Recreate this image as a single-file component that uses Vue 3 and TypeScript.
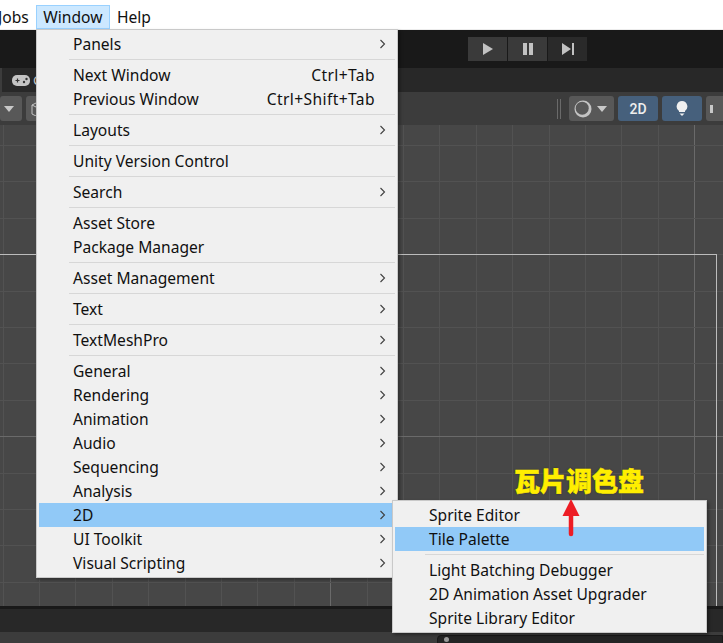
<script setup lang="ts">
import { computed } from 'vue';

type MenuEntry =
  | { sep: true }
  | { label: string; shortcut?: string; arrow?: boolean; active?: boolean };

const windowMenu: MenuEntry[] = [
  { label: 'Panels', arrow: true },
  { sep: true },
  { label: 'Next Window', shortcut: 'Ctrl+Tab' },
  { label: 'Previous Window', shortcut: 'Ctrl+Shift+Tab' },
  { sep: true },
  { label: 'Layouts', arrow: true },
  { sep: true },
  { label: 'Unity Version Control' },
  { sep: true },
  { label: 'Search', arrow: true },
  { sep: true },
  { label: 'Asset Store' },
  { label: 'Package Manager' },
  { sep: true },
  { label: 'Asset Management', arrow: true },
  { sep: true },
  { label: 'Text', arrow: true },
  { sep: true },
  { label: 'TextMeshPro', arrow: true },
  { sep: true },
  { label: 'General', arrow: true },
  { label: 'Rendering', arrow: true },
  { label: 'Animation', arrow: true },
  { label: 'Audio', arrow: true },
  { label: 'Sequencing', arrow: true },
  { label: 'Analysis', arrow: true },
  { label: '2D', arrow: true, active: true },
  { label: 'UI Toolkit', arrow: true },
  { label: 'Visual Scripting', arrow: true },
];

const subMenu: MenuEntry[] = [
  { label: 'Sprite Editor' },
  { label: 'Tile Palette', active: true },
  { sep: true },
  { label: 'Light Batching Debugger' },
  { label: '2D Animation Asset Upgrader' },
  { label: 'Sprite Library Editor' },
];

// Scene grid, cell is 36.4px, every tenth line is brighter
const gridX = computed(() => {
  const lines = [];
  for (let i = 0; i < 20; i++) {
    lines.push({ pos: Math.round(2.5 + 36.4 * i) + 0.5, major: i === 9 || i === 19 });
  }
  return lines;
});
const gridY = computed(() => {
  const lines = [];
  for (let i = 0; i < 14; i++) {
    lines.push({ pos: Math.round(20 + 36.4 * i) + 0.5, major: i === 8 });
  }
  return lines;
});
</script>

<template>
  <div class="editor">
    <div class="menubar">
      <span class="menubar-item first">Jobs</span>
      <span class="menubar-item open">Window</span>
      <span class="menubar-item">Help</span>
    </div>

    <div class="topbar">
      <div class="play-group">
        <button class="play-btn">
          <svg width="12" height="14" viewBox="0 0 12 14"><path d="M1 1l10 6-10 6z" fill="#c2c2c2" /></svg>
        </button>
        <button class="play-btn">
          <svg width="12" height="14" viewBox="0 0 12 14"><path d="M1 1h4v12H1zM7 1h4v12H7z" fill="#c2c2c2" /></svg>
        </button>
        <button class="play-btn dim">
          <svg width="14" height="14" viewBox="0 0 14 14"><path d="M1 1l9 6-9 6zM11 1h2v12h-2z" fill="#c2c2c2" /></svg>
        </button>
      </div>
    </div>

    <div class="tabbar">
      <div class="tab-edge"></div>
      <svg class="pad-icon" width="18" height="11" viewBox="0 0 18 11">
        <rect x="0" y="0" width="18" height="11" rx="5" fill="#c4c4c4" />
        <path d="M3.500 5.500h4M5.500 3.500v4" stroke="#333" stroke-width="1.200" />
        <circle cx="12" cy="7" r="1.200" fill="#333" />
        <circle cx="14.500" cy="4" r="1.200" fill="#333" />
      </svg>
      <span class="tab-label">Game</span>
    </div>

    <div class="toolbar">
      <div class="tool-btn caret-btn"><span class="caret"></span></div>
      <div class="tool-btn cube-btn">
        <svg width="10" height="14" viewBox="0 0 10 14" fill="none" stroke="#c4c4c4">
          <path d="M1 3l4-2 5 2v9l-5 2-4-2zM1 3l4 2 5-2" />
        </svg>
      </div>
      <div class="spacer"></div>
      <div class="handle"></div>
      <div class="tool-btn shade-btn">
        <svg width="18" height="18" viewBox="0 0 18 18">
          <circle cx="9" cy="9" r="8.500" fill="#c4c4c4" />
          <circle cx="8.200" cy="8.200" r="6.500" fill="#585858" />
        </svg>
        <span class="caret"></span>
      </div>
      <div class="tool-btn mode-btn">2D</div>
      <div class="tool-btn mode-btn">
        <svg width="12" height="16" viewBox="0 0 12 16">
          <path d="M6 0a5.500 5.500 0 0 1 3 10v1H3v-1A5.500 5.500 0 0 1 6 0z" fill="#f0f0f0" />
          <path d="M3.500 12.500h5L6 15z" fill="#f0f0f0" />
        </svg>
      </div>
      <div class="tool-btn last-btn"><span class="mark"></span></div>
    </div>

    <div class="scene">
      <svg class="grid" width="723" height="481" shape-rendering="crispEdges">
        <line
          v-for="l in gridX"
          :key="'x' + l.pos"
          :x1="l.pos"
          :x2="l.pos"
          y1="0"
          y2="481"
          :stroke="l.major ? '#6a6a6a' : '#525252'"
        />
        <line
          v-for="l in gridY"
          :key="'y' + l.pos"
          x1="0"
          x2="723"
          :y1="l.pos"
          :y2="l.pos"
          :stroke="l.major ? '#6a6a6a' : '#525252'"
        />
      </svg>
      <div class="frame"></div>
    </div>

    <div class="bottom-rule"></div>
    <div class="bottom-bar"></div>
    <div class="status-bar">
      <div class="search-field"><span class="search-dot"></span></div>
    </div>

    <!-- Window menu -->
    <div class="menu main-menu">
      <template v-for="(item, i) in windowMenu" :key="i">
        <div v-if="'sep' in item" class="sep"></div>
        <div v-else class="row" :class="{ active: item.active }">
          <span class="label">{{ item.label }}</span>
          <span v-if="item.shortcut" class="shortcut">{{ item.shortcut }}</span>
          <svg v-if="item.arrow" class="chevron" width="7" height="10" viewBox="0 0 7 10">
            <path d="M1.500 1l4 4-4 4" fill="none" stroke="#404040" stroke-width="1.100" />
          </svg>
        </div>
      </template>
    </div>

    <!-- 2D submenu -->
    <div class="menu sub-menu">
      <template v-for="(item, i) in subMenu" :key="i">
        <div v-if="'sep' in item" class="sep"></div>
        <div v-else class="row" :class="{ active: item.active }">
          <span class="label">{{ item.label }}</span>
        </div>
      </template>
    </div>

    <!-- Annotation on top of the screenshot -->
    <div class="note">瓦片调色盘</div>
    <svg class="note-arrow" width="18" height="38" viewBox="0 0 18 38">
      <path d="M9 0l8.500 17H0.500z" fill="#ed1c24" />
      <path d="M9 14v21" stroke="#ed1c24" stroke-width="4.500" stroke-linecap="round" />
    </svg>
  </div>
</template>

<style scoped>
.editor {
  position: relative;
  width: 723px;
  height: 643px;
  overflow: hidden;
  display: flex;
  flex-direction: column;
  background: #3c3c3c;
  font-family: "Noto Sans", "Noto Sans CJK SC", sans-serif;
  font-size: 15.6px;
  color: #101010;
}

.menubar {
  flex: none;
  height: 29px;
  background: #fff;
  border-bottom: 1px solid #ececec;
  display: flex;
  align-items: flex-end;
}

.menubar-item {
  padding: 0 6px;
  border: 1px solid transparent;
  height: 22px;
  line-height: 23px;
}

.menubar-item.first {
  margin-left: -9px;
}

.menubar-item.open {
  padding: 0 6.5px;
  background: #cce8ff;
  border-color: #99d1ff;
}

.topbar {
  flex: none;
  height: 38px;
  background: #191919;
  display: flex;
  align-items: center;
  justify-content: flex-end;
  padding-right: 136px;
}

.play-group {
  display: flex;
  gap: 1px;
}

.play-btn {
  width: 39px;
  height: 24px;
  border: none;
  padding: 0;
  background: #3a3a3a;
  display: flex;
  align-items: center;
  justify-content: center;
}

.play-btn.dim {
  background: #2a2a2a;
}

.tabbar {
  flex: none;
  height: 24px;
  background: #282828;
  display: flex;
  align-items: center;
}

.tab-edge {
  width: 2px;
  height: 24px;
  background: #3c3c3c;
}

.pad-icon {
  margin-left: 10px;
}

.tab-label {
  margin-left: 3px;
  font-size: 13px;
  color: #c4c4c4;
}

.toolbar {
  flex: none;
  height: 33px;
  background: #3c3c3c;
  display: flex;
  align-items: center;
}

.tool-btn {
  height: 25px;
  border-radius: 3px;
  background: #585858;
  display: flex;
  align-items: center;
  justify-content: center;
  flex: none;
}

.caret {
  display: block;
  width: 0;
  height: 0;
  border-left: 5px solid transparent;
  border-right: 5px solid transparent;
  border-top: 6px solid #c8c8c8;
}

.caret-btn {
  width: 22px;
  margin-right: 4px;
  justify-content: flex-end;
  padding-right: 8px;
  box-sizing: border-box;
}

.cube-btn {
  width: 30px;
  justify-content: flex-start;
  padding-left: 5px;
  box-sizing: border-box;
}

.spacer {
  flex: 1;
}

.handle {
  width: 2px;
  height: 20px;
  border-left: 1px solid #6a6a6a;
  border-right: 1px solid #6a6a6a;
  margin-right: 8px;
  flex: none;
}

.shade-btn {
  width: 45px;
  gap: 5px;
  padding-left: 5px;
  justify-content: flex-start;
  margin-right: 4px;
  box-sizing: border-box;
}

.mode-btn {
  width: 40px;
  margin-right: 4px;
  background: #46607c;
  color: #eee;
  font-size: 14px;
  font-family: Roboto, sans-serif;
  font-weight: 500;
}

.last-btn {
  width: 17px;
  justify-content: flex-start;
  padding-left: 4px;
  box-sizing: border-box;
  border-radius: 3px 0 0 3px;
}

.mark {
  display: block;
  width: 3px;
  height: 8px;
  background: #c8c8c8;
}

.scene {
  position: relative;
  flex: 1;
  background: #474747;
  overflow: hidden;
}

.grid {
  position: absolute;
  inset: 0;
}

.frame {
  position: absolute;
  left: -2px;
  top: 129px;
  width: 717px;
  height: 600px;
  border: 1px solid #bcbcbc;
}

.bottom-rule {
  flex: none;
  height: 3px;
  background: #191919;
}

.bottom-bar {
  flex: none;
  height: 23px;
  background: #282828;
}

.status-bar {
  flex: none;
  height: 11px;
  background: #3c3c3c;
  padding-left: 437px;
  padding-top: 3px;
  box-sizing: border-box;
}

.search-field {
  height: 14px;
  border-radius: 4px 0 0 0;
  background: #242424;
  border: 1px solid #1a1a1a;
  position: relative;
}

.search-dot {
  position: absolute;
  left: 6px;
  top: 1px;
  width: 5px;
  height: 5px;
  border-radius: 50%;
  background: #999;
}

.menu {
  position: absolute;
  box-sizing: border-box;
  background: #f0f0f0;
  border: 1px solid #c9c9c9;
  padding: 2px;
  box-shadow: 2px 2px 3px rgba(0, 0, 0, 0.35);
}

.main-menu {
  left: 36px;
  top: 29px;
  width: 362px;
}

.sub-menu {
  left: 392px;
  top: 500px;
  width: 315px;
}

.row {
  position: relative;
  height: 24px;
  line-height: 24px;
  padding-left: 34px;
  display: flex;
  white-space: nowrap;
}

.row.active {
  background: #91c9f7;
}

.sep {
  height: 1px;
  margin: 3px 0 3px 30px;
  background: #d7d7d7;
}

.shortcut {
  margin-left: auto;
  padding-right: 20px;
  letter-spacing: 0.4px;
}

.chevron {
  position: absolute;
  right: 9px;
  top: 7px;
}

.note {
  position: absolute;
  left: 514px;
  top: 462px;
  font-family: "Noto Sans CJK SC", sans-serif;
  font-size: 26px;
  line-height: 36px;
  font-weight: 900;
  color: #ffee00;
  -webkit-text-stroke: 0.5px #ffee00;
  text-shadow: 0 0 2px rgba(0, 0, 0, 0.5);
  white-space: nowrap;
}

.note-arrow {
  position: absolute;
  left: 562px;
  top: 499px;
}
</style>

<style>
html,
body {
  margin: 0;
  background: #3c3c3c;
}
</style>
